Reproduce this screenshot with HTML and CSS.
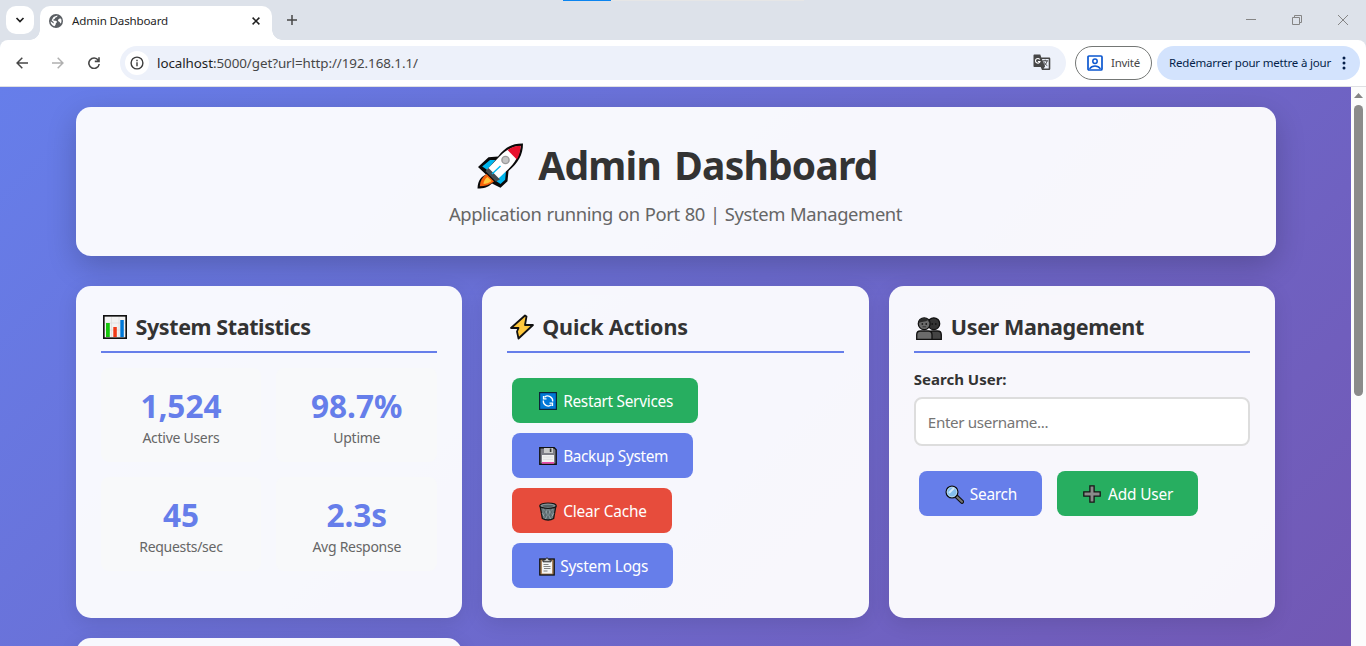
FILE: index.html
```html
<!DOCTYPE html>
<html lang="fr">
<head>
<meta charset="utf-8">
<title>Admin Dashboard</title>
<link rel="stylesheet" href="styles.css">
</head>
<body>
<div class="browser">
  <header class="tabstrip">
    <div class="loadbar"><span class="loadbar-fill"></span></div>
    <button class="tab-search"><svg width="10" height="8" viewBox="0 0 10 8"><path d="M1.500 2 5 5.500 8.500 2" fill="none" stroke="#1f1f1f" stroke-width="1.700"/></svg></button>
    <div class="tab">
      <svg class="tab-globe" width="14" height="14" viewBox="0 0 14 14"><circle cx="7" cy="7" r="7" fill="#5a5e63"/><path d="M8.300 1.600C9 2.600 7.500 3.200 6.600 3.600 5.600 4 6.200 5.200 5 5.300 4.300 5.400 3.900 6.200 4.700 6.600 6 7 7.600 6.400 7.900 7.700 8.100 8.800 6.700 8.700 6.700 10c0 1-.7 1.700-1.300 2.300C3 11.600 1.600 9.600 1.600 7.300l3 2.200c.6-.8-.2-1.700-.9-2.300L2.600 6.300C3.500 5.500 3.700 3.500 5 2.700z" fill="#fff"/><path d="M9.500 5.300c.8-.9 1.800-.8 2.700-.3.500 1.500.4 3.200-.4 4.600-.7-.3-.7-1.500-1.700-1.800-1-.3-1.500-1.600-.6-2.500z" fill="#fff"/></svg>
      <span class="tab-title">Admin Dashboard</span>
      <svg class="tab-close" width="8" height="8" viewBox="0 0 8 8"><path d="M.6.6l6.800 6.800M7.400.6.6 7.400" stroke="#1f1f1f" stroke-width="1.500"/></svg>
    </div>
    <svg class="tab-new" width="10" height="10" viewBox="0 0 10 10"><path d="M5 0v10M0 5h10" stroke="#474747" stroke-width="1.500"/></svg>
    <div class="window-buttons">
      <svg width="10" height="10" viewBox="0 0 10 10"><path d="M0 4.500h10" stroke="#858585"/></svg>
      <svg width="10" height="10" viewBox="0 0 10 10"><path d="M.5 2.500h7v7h-7zM2.500 2.500v-2h7v7h-2" fill="none" stroke="#858585"/></svg>
      <svg width="10" height="10" viewBox="0 0 10 10"><path d="M0 0l10 10M10 0 0 10" stroke="#858585"/></svg>
    </div>
  </header>
  <div class="toolbar">
    <div class="nav">
      <svg width="12" height="12" viewBox="0 0 12 12"><path d="M12 6H1.300M6.300.8 1.100 6l5.200 5.200" fill="none" stroke="#474747" stroke-width="1.500"/></svg>
      <svg width="12" height="12" viewBox="0 0 12 12"><path d="M0 6h10.700M5.700.8 10.900 6l-5.200 5.200" fill="none" stroke="#b0b0b0" stroke-width="1.500"/></svg>
      <svg width="12" height="12" viewBox="0 0 12 12"><path d="M10.300 3.200A5.200 5.200 0 1 0 11.200 7M11 .2v4.200H6.800" fill="none" stroke="#474747" stroke-width="1.600"/></svg>
    </div>
    <div class="omnibox">
      <span class="site-info"><svg width="14" height="14" viewBox="0 0 14 14"><circle cx="7" cy="7" r="5.900" fill="none" stroke="#3c3c3c" stroke-width="1.400"/><path d="M7 6.200v4M7 3.700v1.500" stroke="#3c3c3c" stroke-width="1.400"/></svg></span>
      <span class="url"><b>localhost</b>:5000/get?url=http://192.168.1.1/</span>
      <svg class="translate" width="18" height="17" viewBox="0 0 18 17"><path d="M1.500.5h5.800l1 3h7.700c.8 0 1.300.5 1.300 1.300v10c0 .8-.5 1.300-1.300 1.300H9l-1.300-3H1.500C.8 13.100.5 12.700.5 12V1.500C.5.900.9.500 1.500.5z" fill="#474747"/><path d="M8.900 4.900h6.800v9.700h-5.200l1.600-2z" fill="#edf1fa"/><path d="M6.700 5.500A2.300 2.300 0 1 0 7 7.500H4.900" fill="none" stroke="#fff" stroke-width="1.100"/><path d="M9.600 6.800h5.600M12.200 5.700v1.100M14 7c-.4 1.900-1.400 3.300-3 4.500M10.700 7.700c.8 1.700 1.900 2.900 3.600 4" fill="none" stroke="#474747"/></svg>
    </div>
    <div class="guest"><svg width="16" height="16" viewBox="0 0 16 16"><rect x="1" y="1" width="14" height="14" rx="1" fill="none" stroke="#0b57d0" stroke-width="1.700"/><circle cx="8" cy="6.300" r="2.200" fill="none" stroke="#0b57d0" stroke-width="1.500"/><path d="M2.500 13.900c1.400-2 3.200-2.900 5.500-2.900s4.100.9 5.500 2.900" fill="none" stroke="#0b57d0" stroke-width="1.500"/></svg><span>Invité</span></div>
    <div class="relaunch"><span>Redémarrer pour mettre à jour</span><svg width="4" height="14" viewBox="0 0 4 14"><g fill="#041e49"><circle cx="2" cy="2" r="1.500"/><circle cx="2" cy="7" r="1.500"/><circle cx="2" cy="12" r="1.500"/></g></svg></div>
  </div>
  <div class="viewport">
    <div class="page">
      <div class="container">
        <section class="hero">
          <h1><svg width="48" height="46" viewBox="0 0 48 46"><path d="M47 .5C37 .3 29 4 22 13.500l-9.500.8L2 24l8 7.500C5 34 2 37 1.500 45.500c6.500 0 10.500-1.200 14.500-5l8.500 4.300 7-6.500 1-10.300C42 20 47 12 47 .5z" fill="#0a0a0a"/><path d="M14 17h5.500L11 26.800l-4.800-3.300zM30 28l-.8 8.800-4.700 4.200-5.200-3.500z" fill="#00b7ee"/><path d="M44.700 3C36.500 3.200 30 7 24 13L10.500 27l9.800 10.500L31.500 27C38.500 20.500 43.500 12.500 44.700 3z" fill="#fff"/><path d="M44.700 2.800c-5 .1-9.500 1.500-13.200 4.200l9.300 9.500c2.300-3.900 3.700-8.300 3.900-13.700z" fill="#e8112d"/><path d="M9.500 28.300l3-3.300L24 36.500l-4.300 2z" fill="#454c50"/><path d="M10.500 31l7.500 7.500C13.500 42 9 43.200 3.800 43.200c.3-5.200 2.500-9.200 6.700-12.200z" fill="#f7630c"/><path d="M11.500 34l4 4c-2 2-5.500 3-8 3 0-2.500 1.500-5.500 4-7z" fill="#ffc83d"/><path d="M24.500 23l-8.500 8" stroke="#00b7ee" stroke-width="1.400"/><circle cx="29.500" cy="17" r="4.300" fill="#9b9b9b"/><circle cx="29.500" cy="17" r="2.900" fill="#c4c4c4"/></svg><span>Admin Dashboard</span></h1>
          <p>Application running on Port 80 | System Management</p>
        </section>
        <div class="grid">
          <section class="card">
            <h2><svg class="ic-chart" width="24" height="24" viewBox="0 0 24 24"><rect x=".8" y=".8" width="22.400" height="22.400" fill="#f2f2f2" stroke="#111" stroke-width="1.700"/><path d="M8.500 2v20M16 2v20M2 8h20M2 15h20" stroke="#dedede" stroke-width=".8"/><path d="M3 8h3.800v14H3z" fill="#16c60c"/><path d="M10.300 12h3.500v10h-3.500z" fill="#f03a17"/><path d="M17.300 5h3.500v17h-3.500z" fill="#0078d7"/></svg><span>System Statistics</span></h2>
            <div class="stats">
              <div class="stat"><strong>1,524</strong><span>Active Users</span></div>
              <div class="stat"><strong>98.7%</strong><span>Uptime</span></div>
              <div class="stat"><strong>45</strong><span>Requests/sec</span></div>
              <div class="stat"><strong>2.3s</strong><span>Avg Response</span></div>
            </div>
          </section>
          <section class="card">
            <h2 class="quick"><svg class="ic-bolt" width="24" height="26" viewBox="0 0 24 26"><path d="M15 1.500 1 14h7.500L7 17.500 8.500 24.500 23 11h-8l1.500-8.500z" fill="#ffc83d" stroke="#111" stroke-width="1.800" stroke-linejoin="round"/></svg><span>Quick Actions</span></h2>
            <div class="actions">
              <button class="btn green"><svg width="18" height="18" viewBox="0 0 18 18"><rect x=".6" y=".6" width="16.800" height="16.800" fill="#0078d7" stroke="#0b2438" stroke-width="1.200"/><path d="M5.500 5.200A5 5 0 0 1 13.700 9.500M12.500 12.800A5 5 0 0 1 4.300 8.500M4.500 4v2.800h3M13.500 14v-2.800h-3" fill="none" stroke="#fff" stroke-width="1.300"/></svg><span>Restart Services</span></button>
              <button class="btn backup"><svg width="18" height="18" viewBox="0 0 18 18"><path d="M.8.8h14.400l2 2v14.400H.8z" fill="#7e7e86" stroke="#111" stroke-width="1.400"/><path d="M5 1h9v5H5z" fill="#c9c9c9"/><path d="M10.800 1.500h1.600v3.500h-1.600z" fill="#333"/><path d="M3 8h12v8.500H3z" fill="#f2f2f2"/><path d="M3 15.300h12v1.200H3z" fill="#e3008c"/><path d="M4 10h10M4 12.300h10" stroke="#d0d0d0" stroke-width=".6"/></svg><span>Backup System</span></button>
              <button class="btn red"><svg width="18" height="19" viewBox="0 0 18 19"><path d="M1.200 4.500h15.600l-2.200 12c-3 2-8 2-11.200 0z" fill="#69797e" stroke="#151515" stroke-width="1.300"/><path d="M4 6l8 11M8 6l6 8M14 6 6 17M10 6l-6 8M3 11l4 6M15 11l-4 6" stroke="#a4b1b5" stroke-width=".7"/><path d="M6 5.500v11M9 5.500v12M12 5.500v11" stroke="#3d474b" stroke-width=".6"/><ellipse cx="9" cy="3.700" rx="8.200" ry="2.700" fill="#859599" stroke="#151515" stroke-width="1.200"/><ellipse cx="9" cy="3.900" rx="5.800" ry="1.200" fill="#566164"/></svg><span>Clear Cache</span></button>
              <button class="btn logs"><svg width="16" height="19" viewBox="0 0 16 19"><rect x=".8" y="2" width="14.400" height="16" fill="#ad8762" stroke="#111" stroke-width="1.300"/><path d="M3 4h10v12.500H3z" fill="#f5f5f5"/><path d="M4 4.800V2.900h2.200C6.400.5 9.600.5 9.800 2.900H12v1.900z" fill="#c8c8c8" stroke="#222"/><path d="M4.500 7.500h5M4.500 9.500h7M5 11.500h6.500M4.500 14h4" stroke="#777" stroke-width=".9"/></svg><span>System Logs</span></button>
            </div>
          </section>
          <section class="card">
            <h2 class="users"><svg class="ic-users" width="26" height="23" viewBox="0 0 26 23"><g stroke="#111" stroke-width="1.300"><path d="M13 22.300v-5c0-2 1.500-3.300 3.500-3.300h5c2.300 0 3.800 1.500 3.800 3.800v4.500z" fill="#444"/><circle cx="17.800" cy="6.700" r="5.900" fill="#333"/><path d="M.7 22.300v-4.500C.7 15.500 2.200 14 4.500 14h8c2.300 0 3.500 1.500 3.500 3.800v4.500z" fill="#6b6b6b"/><circle cx="8.200" cy="6.700" r="5.900" fill="#6b6b6b"/></g><path d="M2.500 6C3 2.800 5.500 1 8.200 1s5.200 1.800 5.700 5c-1-.8-1.700-1.800-2-2.800C9.500 5 5 4.500 2.500 6z" fill="#2b2b2b"/><path d="M5.600 7h1.500M9.500 7H11M15.500 7H17M19 7h1.500" stroke="#111" stroke-width="1.400"/><path d="M6.500 9.800h3.600" stroke="#222" stroke-width=".8"/></svg><span>User Management</span></h2>
            <label class="field-label" for="user">Search User:</label>
            <input class="field" id="user" type="text" placeholder="Enter username...">
            <div class="user-actions">
              <button class="btn search"><svg width="19" height="19" viewBox="0 0 19 19"><path d="M11 11l6 5.800" stroke="#111" stroke-width="4.200" stroke-linecap="round"/><path d="M12 12l5 4.800" stroke="#777" stroke-width="2" stroke-linecap="round"/><circle cx="7" cy="7" r="5.900" fill="#83beec" stroke="#111" stroke-width="1.300"/><circle cx="7" cy="7" r="4.800" fill="none" stroke="#b9d9f1" stroke-width=".9"/><path d="M4 8l5-5" stroke="#d3e9fa" stroke-width="2"/></svg><span>Search</span></button>
              <button class="btn green add"><svg width="18" height="18" viewBox="0 0 18 18"><path d="M6.900.8h4.200v6.100h6.100v4.200h-6.100v6.100H6.900v-6.100H.8V6.900h6.100z" fill="#8a8a8a" stroke="#151515" stroke-width="1.300"/></svg><span>Add User</span></button>
            </div>
          </section>
          <section class="card next"></section>
        </div>
      </div>
    </div>
    <div class="scrollbar"><svg width="9" height="5" viewBox="0 0 9 5"><path d="M4.500 0 9 5H0z" fill="#858585"/></svg><span class="thumb"></span></div>
  </div>
</div>
</body>
</html>
```
FILE: styles.css
```css
* { box-sizing: border-box; }
body { margin: 0; background: #fff; font-family: "Noto Sans", sans-serif; color: #333; overflow: hidden; }
svg { display: block; flex: none; }
button { font: inherit; border: 0; padding: 0; margin: 0; }
.browser { width: 1366px; height: 646px; display: flex; flex-direction: column; overflow: hidden; background: #dde2ea; }

.tabstrip { height: 40px; flex: none; display: flex; align-items: flex-start; padding-left: 6px; position: relative; }
.loadbar { position: absolute; left: 563px; top: 0; width: 241px; height: 1px; background: #e6e6e6; }
.loadbar-fill { display: block; width: 48px; height: 1px; background: #0a84f0; }
.tab-search { width: 28px; height: 28px; margin-top: 6px; border-radius: 10px; background: #fff; display: grid; place-items: center; }
.tab { width: 232px; height: 34px; margin: 6px 0 0 6px; border-radius: 10px 10px 0 0; background: #fff; display: flex; align-items: center; padding: 0 12px 5px 9px; position: relative; }
.tab::before, .tab::after { content: ""; position: absolute; bottom: 0; width: 10px; height: 10px; }
.tab::before { left: -10px; background: radial-gradient(circle at 0 0, transparent 9.5px, #fff 10px); }
.tab::after { right: -10px; background: radial-gradient(circle at 100% 0, transparent 9.5px, #fff 10px); }
.tab-title { margin-left: 9px; font-size: 11.6px; letter-spacing: -.17px; color: #1f1f1f; line-height: 18px; flex: 1; }
.tab-new { margin: 15px 0 0 15px; }
.window-buttons { display: flex; gap: 36px; margin: 15px 18px 0 auto; }

.toolbar { height: 47px; flex: none; background: #fff; border-bottom: 1px solid #dfe0e3; border-radius: 8px 8px 0 0; display: flex; align-items: center; padding: 0 6px 1px 16px; }
.nav { display: flex; gap: 24px; width: 104px; }
.omnibox { width: 946px; height: 34px; border-radius: 17px; background: #edf1fa; display: flex; align-items: center; padding: 0 15px 0 5px; }
.site-info { width: 24px; height: 24px; border-radius: 50%; background: #fff; display: grid; place-items: center; }
.url { margin-left: 8px; font-size: 13.4px; letter-spacing: -.07px; color: #474747; flex: 1; line-height: 20px; }
.url b { font-weight: 400; color: #1f1f1f; }
.guest { margin-left: 9px; width: 77px; height: 34px; border: 1px solid #747775; border-radius: 17px; display: flex; align-items: center; gap: 8px; padding-left: 11px; font-size: 11.5px; letter-spacing: -.25px; color: #474747; }
.relaunch { margin-left: 5px; width: 203px; height: 34px; border-radius: 17px; background: #d3e3fd; display: flex; align-items: center; gap: 11px; padding-left: 12px; font-size: 11.5px; letter-spacing: -.19px; color: #041e49; white-space: nowrap; }

.viewport { height: 559px; display: flex; overflow: hidden; }
.page { width: 1351px; height: 1190px; padding: 20px 0; background: linear-gradient(135deg, #667eea 0%, #764ba2 100%); }
.container { width: 1200px; margin: 0 auto; }
.hero { height: 149px; padding: 30px; border-radius: 15px; background: rgba(255,255,255,.95); box-shadow: 0 10px 30px rgba(0,0,0,.2); text-align: center; }
.hero h1 { margin: 0; display: flex; justify-content: center; gap: 14px; padding-left: 3px; font-size: 39px; line-height: 55px; letter-spacing: -.8px; word-spacing: 4px; font-weight: 700; }
.hero h1 svg { margin-top: 6px; }
.hero p { margin: 9px 0 0; font-size: 18.4px; line-height: 26px; letter-spacing: -.38px; word-spacing: .6px; color: #666; }
.grid { margin-top: 30px; display: grid; grid-template-columns: repeat(3, 1fr); grid-template-rows: 332px 332px; gap: 20px; }
.card { padding: 25px; border-radius: 15px; background: rgba(255,255,255,.95); box-shadow: 0 5px 20px rgba(0,0,0,.1); }
.card h2 { margin: 0 0 15px; height: 42px; display: flex; border-bottom: 2px solid #667eea; font-size: 21.5px; line-height: 31px; letter-spacing: -.4px; font-weight: 700; white-space: nowrap; }
.card h2.quick { letter-spacing: -.12px; }
.card h2.users { letter-spacing: -.37px; }
.ic-chart { margin: 4px 9px 0 2px; }
.ic-bolt { margin: 3px 8px 0 3px; }
.ic-users { margin: 6px 9px 0 2px; }

.stats { display: grid; grid-template-columns: 1fr 1fr; gap: 15px; }
.stat { height: 94px; padding-top: 15px; border-radius: 8px; background: #f8f9fa; display: flex; flex-direction: column; align-items: center; }
.stat strong { font-size: 31.5px; line-height: 45px; letter-spacing: 0; color: #667eea; }
.stat span { font-size: 14px; line-height: 20px; letter-spacing: -.28px; color: #666; }

.actions { display: flex; flex-direction: column; align-items: flex-start; gap: 10px; padding: 10px 0 0 5px; }
.btn { height: 45px; padding: 1px 25px 0 27px; border-radius: 8px; background: #667eea; color: #fff; display: flex; align-items: center; gap: 6px; font-size: 15.4px; letter-spacing: -.29px; line-height: 22px; white-space: nowrap; }
.btn span { padding-top: 2px; }
.green { background: #27ae60; }
.red { background: #e74c3c; letter-spacing: -.15px; }
.backup { letter-spacing: -.36px; }
.logs { gap: 5px; letter-spacing: -.23px; }
.search { padding-left: 26px; letter-spacing: -.26px; }
.add { padding-left: 26px; gap: 7px; letter-spacing: -.15px; }
.field-label { display: block; height: 21px; margin-bottom: 8px; font-size: 15px; line-height: 22px; font-weight: 700; }
.field { display: block; width: 100%; height: 49px; border: 2px solid #ddd; border-radius: 8px; background: #fff; padding: 0 12px; font-family: inherit; font-size: 15.2px; letter-spacing: -.36px; }
.field::placeholder { color: #757575; opacity: 1; }
.user-actions { display: flex; gap: 15px; padding: 25px 0 0 5px; }

.scrollbar { width: 15px; height: 559px; background: #fcfcfc; display: flex; flex-direction: column; align-items: center; padding-top: 6px; }
.thumb { width: 9px; height: 291px; margin-top: 7px; border-radius: 5px; background: #8b8b8b; }
```
